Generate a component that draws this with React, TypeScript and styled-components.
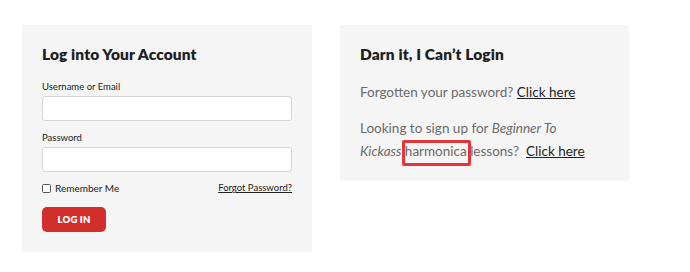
import React from "react";
import styled, { createGlobalStyle } from "styled-components";

const Global = createGlobalStyle`
  html, body { margin: 0; padding: 0; background: #ffffff; }
  body { font-family: Lato, "Open Sans", sans-serif; color: #222; }
`;

const Page = styled.div`
  display: flex;
  align-items: flex-start;
  gap: 28px;
  padding: 25px 0 0 22px;
`;

const Panel = styled.section<{ $w: number; $h: number }>`
  box-sizing: border-box;
  width: ${(p) => p.$w}px;
  height: ${(p) => p.$h}px;
  background: #f5f5f5;
  padding: 20px 20px;
`;

const Heading = styled.h2`
  margin: 0;
  font-size: 15.5px;
  font-weight: 800;
  letter-spacing: 0.1px;
  color: #1f1f1f;
  line-height: 18px;
`;

const Label = styled.label`
  display: block;
  font-size: 9.5px;
  color: #222;
  margin: 0 0 3px;
  line-height: 12px;
`;

const Input = styled.input`
  display: block;
  box-sizing: border-box;
  width: 250px;
  height: 25px;
  border: 1px solid #d6d6d6;
  border-radius: 3px;
  background: #fff;
  margin: 0;
`;

const Field = styled.div<{ $top: number }>`
  margin-top: ${(p) => p.$top}px;
`;

const OptionsRow = styled.div`
  display: flex;
  justify-content: space-between;
  align-items: center;
  width: 250px;
  margin-top: 10px;
  font-size: 10px;
  line-height: 12px;
`;

const Remember = styled.span`
  display: flex;
  align-items: center;
  gap: 4px;
  color: #222;
`;

const Box = styled.span`
  display: inline-block;
  box-sizing: border-box;
  width: 9px;
  height: 9px;
  border: 1px solid #555;
  border-radius: 1.5px;
  background: #fff;
`;

const Forgot = styled.a`
  color: #222;
  text-decoration: underline;
  font-size: 9.5px;
`;

const Button = styled.button`
  margin-top: 13px;
  width: 64px;
  height: 25px;
  border: none;
  border-radius: 5px;
  background: #d22e2b;
  color: #fff;
  font-family: Lato, sans-serif;
  font-weight: 800;
  font-size: 9.5px;
  letter-spacing: 0.2px;
  padding: 0;
`;

const Para = styled.p<{ $top: number }>`
  margin: ${(p) => p.$top}px 0 0;
  max-width: 236px;
  font-size: 13.5px;
  line-height: 23px;
  color: #6b6b6b;
`;

const Link = styled.a`
  color: #1f1f1f;
  text-decoration: underline;
  white-space: nowrap;
`;

const Highlight = styled.span`
  position: relative;
  &::after {
    content: "";
    position: absolute;
    left: -3px;
    right: -4px;
    top: -3px;
    bottom: -7px;
    border: 3px solid #e2363b;
    border-radius: 2px;
  }
`;

export default function App() {
  return (
    <>
      <Global />
      <Page>
        <Panel $w={290} $h={227}>
          <Heading>Log into Your Account</Heading>
          <Field $top={18}>
            <Label>Username or Email</Label>
            <Input type="text" />
          </Field>
          <Field $top={11}>
            <Label>Password</Label>
            <Input type="password" />
          </Field>
          <OptionsRow>
            <Remember>
              <Box />
              Remember Me
            </Remember>
            <Forgot>Forgot Password?</Forgot>
          </OptionsRow>
          <Button>LOG IN</Button>
        </Panel>
        <Panel $w={289} $h={156}>
          <Heading>Darn it, I Can’t Login</Heading>
          <Para $top={18}>
            Forgotten your password? <Link>Click here</Link>
          </Para>
          <Para $top={13}>
            Looking to sign up for <em>Beginner To Kickass</em>{" "}
            <Highlight>harmonica</Highlight> lessons?&nbsp; <Link>Click here</Link>
          </Para>
        </Panel>
      </Page>
    </>
  );
}
